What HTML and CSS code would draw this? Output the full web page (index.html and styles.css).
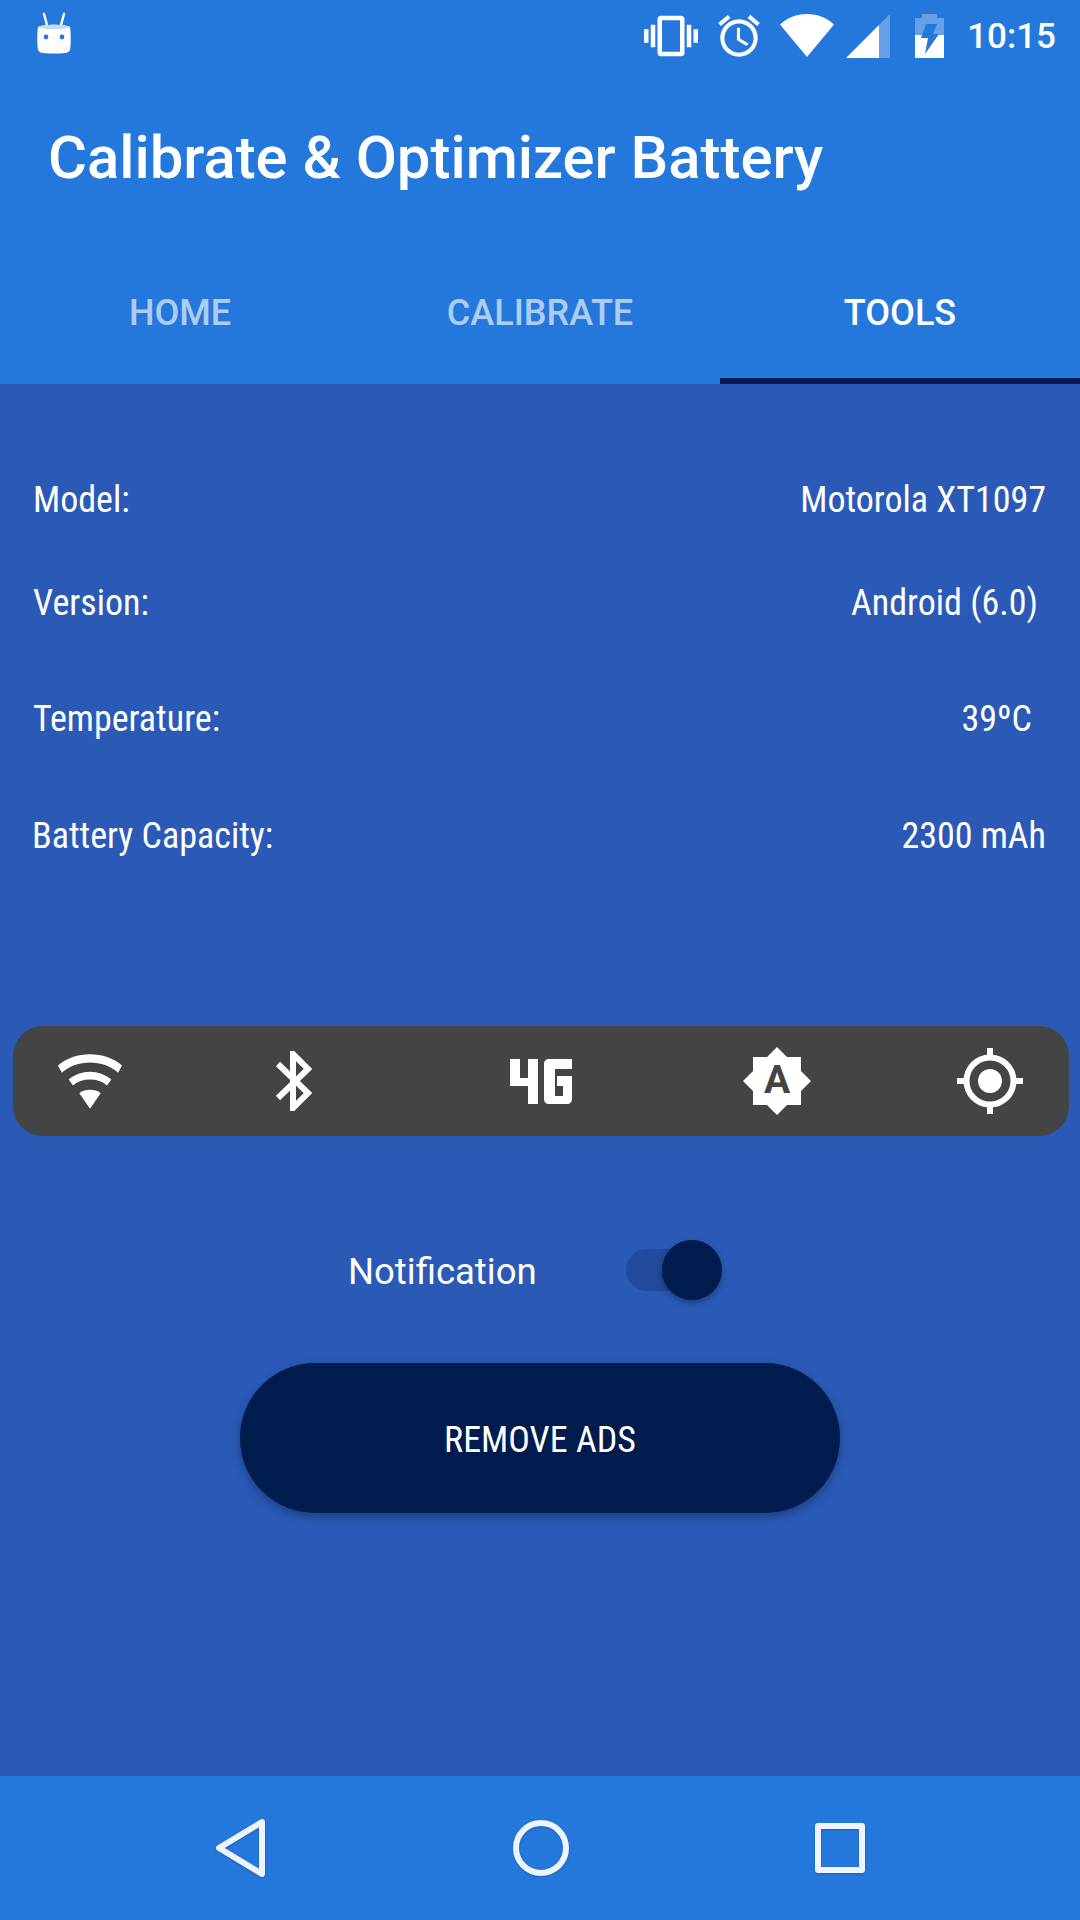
FILE: index.html
```html
<!DOCTYPE html>
<html lang="en">
  <head>
    <meta charset="UTF-8" />
    <meta name="viewport" content="width=device-width, initial-scale=1.0" />
    <title>Calibrate &amp; Optimizer Battery</title>
    <link rel="stylesheet" href="styles.css">
  </head>
  <body>
    <div class="screen">
      <header class="appbar">
        <div class="statusbar">
          <svg class="robot" width="40" height="44" viewBox="0 0 40 44">
            <path d="M10 3l3 11M30 3l-3 11" stroke="#fff" stroke-width="2.4" stroke-linecap="round" />
            <path d="M4 16c4-3 28-3 32 0 1 6 1 17 0 23-1 2-3 3-5 3-7 .7-15 .7-22 0-2 0-4-1-5-3-1-6-1-17 0-23z" fill="#fff" />
            <path d="M4 16c4-3 28-3 32 0-4 3-28 3-32 0z" fill="#c6daf5" />
            <circle cx="12" cy="26" r="2.4" fill="#2478db" />
            <circle cx="28" cy="26" r="2.4" fill="#2478db" />
          </svg>
          <div class="status-icons">
            <svg class="ic-vibrate" width="54" height="54" viewBox="0 0 24 24" fill="#fff">
              <path d="M0 15h2V9H0v6zm3 2h2V7H3v10zm19-8v6h2V9h-2zm-3 8h2V7h-2v10zM16.5 3h-9C6.67 3 6 3.67 6 4.5v15c0 .83.67 1.5 1.5 1.5h9c.83 0 1.5-.67 1.5-1.5v-15c0-.83-.67-1.5-1.5-1.5zM16 19H8V5h8v14z" />
            </svg>
            <svg class="ic-alarm" width="50" height="50" viewBox="0 0 24 24" fill="#fff">
              <path d="M22 5.72l-4.6-3.86-1.29 1.53 4.6 3.86L22 5.72zM7.88 3.39L6.6 1.86 2 5.71l1.29 1.53 4.59-3.85zM12.5 8H11v6l4.75 2.85.75-1.23-4-2.37V8zM12 4c-4.97 0-9 4.03-9 9s4.02 9 9 9c4.97 0 9-4.03 9-9s-4.03-9-9-9zm0 16c-3.87 0-7-3.13-7-7s3.13-7 7-7 7 3.13 7 7-3.13 7-7 7z" />
            </svg>
            <svg class="ic-wifi" width="54" height="44" viewBox="0 0 54 44" fill="#fff">
              <path d="M0 10.500C7 4 16.500 0 27 0s20 4 27 10.500L27 43z" />
            </svg>
            <svg class="ic-signal" width="44" height="44" viewBox="0 0 44 44" fill="#fff">
              <path d="M33 11L44 0v44H33z" opacity=".3" />
              <path d="M0 44L33 11v33z" />
            </svg>
            <svg class="ic-battery" width="29" height="44" viewBox="0 0 29 44" fill="#fff">
              <path d="M7 0h15v4h7v17H0V4h7z" opacity=".3" />
              <path d="M0 21h29v23H0z" />
              <path d="M11 10h11l-4 10h6L10 40l3-16H6z" fill="#2478db" />
            </svg>
            <span class="clock">10:15</span>
          </div>
        </div>
        <h1 class="title">Calibrate &amp; Optimizer Battery</h1>
        <nav class="tabs">
          <a class="tab">HOME</a>
          <a class="tab">CALIBRATE</a>
          <a class="tab active">TOOLS</a>
        </nav>
      </header>

      <main class="content">
        <div class="info-row row-model"><span>Model:</span><span>Motorola XT1097</span></div>
        <div class="info-row row-version"><span>Version:</span><span>Android (6.0)</span></div>
        <div class="info-row row-temp"><span>Temperature:</span><span>39ºC</span></div>
        <div class="info-row row-battery"><span>Battery Capacity:</span><span>2300 mAh</span></div>

        <div class="quick-bar">
          <svg class="q-wifi" width="64" height="55" viewBox="0 0 66 56" fill="#fff">
            <path d="M0 11.500C9 4 20.500 0 33 0s24 4 33 11.500L62 19C54 12 44 8.500 33 8.500S12 12 4 19z" />
            <path d="M11 26c6-5 14-8 22-8s16 3 22 8l-4.500 6C46 28 40 26 33 26s-13 2-17.500 6z" />
            <path d="M22 40c3-2.500 7-3.500 11-3.500s8 1 11 3.500L33 56z" />
          </svg>
          <svg class="q-bt" width="37" height="60" viewBox="0 0 37 60" fill="none" stroke="#fff" stroke-width="6">
            <path d="M3 13l30 29-15 15V3l15 15L3 47" />
          </svg>
          <svg class="q-4g" width="62" height="45" viewBox="0 0 62 45" fill="#fff">
            <path d="M0 0h10v19h8V0h10v45H18V27H0z" />
            <path d="M39 0h23v10H45v27h8V27h-6V17h15v23c0 3-2 5-5 5H39c-3 0-5-2-5-5V5c0-3 2-5 5-5z" />
          </svg>
          <svg class="q-auto" width="68" height="68" viewBox="0 0 68 68">
            <path d="M34 0l10 10h14v14l10 10-10 10v14H44L34 68 24 58H10V44L0 34l10-10V10h14z" fill="#fff" />
            <text class="q-letter" x="34" y="46" text-anchor="middle">A</text>
          </svg>
          <svg class="q-gps" width="66" height="66" viewBox="0 0 66 66" fill="none" stroke="#fff">
            <circle cx="33" cy="33" r="23.500" stroke-width="6" />
            <circle cx="33" cy="33" r="12" fill="#fff" stroke="none" />
            <path d="M33 0v10M33 56v10M0 33h10M56 33h10" stroke-width="6" />
          </svg>
        </div>

        <div class="notify-row">
          <span class="notify-label">Notification</span>
          <div class="switch"><div class="switch-thumb"></div></div>
        </div>

        <button class="remove-ads">REMOVE ADS</button>
      </main>

      <footer class="navbar">
        <svg class="nav-icon" width="52" height="60" viewBox="0 0 52 60" fill="none" stroke="#edf4fd" stroke-width="6" stroke-linejoin="round">
          <path d="M47 4L4 30l43 26z" />
        </svg>
        <svg class="nav-icon" width="56" height="56" viewBox="0 0 56 56" fill="none" stroke="#edf4fd" stroke-width="6">
          <circle cx="28" cy="28" r="25" />
        </svg>
        <svg class="nav-icon" width="50" height="50" viewBox="0 0 50 50" fill="none" stroke="#edf4fd" stroke-width="6" stroke-linejoin="round">
          <rect x="3" y="3" width="44" height="44" />
        </svg>
      </footer>
    </div>
  </body>
</html>
```

FILE: styles.css
```css
/* Base */
body {
  margin: 0;
  font-family: Roboto, "Noto Sans", sans-serif;
  color: #fff;
}
.screen {
  width: 1080px;
  height: 1920px;
  display: flex;
  flex-direction: column;
  background-color: #2a5ab6;
  overflow: hidden;
}

/* Top bar */
.appbar {
  background-color: #2478db;
  height: 384px;
  display: flex;
  flex-direction: column;
  flex-shrink: 0;
}
.statusbar {
  height: 72px;
  display: flex;
  justify-content: space-between;
  align-items: center;
  padding: 0 24px 0 34px;
}
.robot {
  margin-top: -6px;
}
.status-icons {
  display: flex;
  align-items: center;
}
.ic-alarm { margin-left: 16px; }
.ic-wifi { margin-left: 16px; }
.ic-signal { margin-left: 12px; }
.ic-battery { margin-left: 25px; }
.clock {
  margin-left: 23px;
  font-size: 35px;
  font-weight: 500;
}
.title {
  margin: 0;
  padding: 0 0 0 48px;
  height: 168px;
  line-height: 173px;
  font-size: 59.8px;
  font-weight: 500;
  white-space: nowrap;
}

/* Tabs */
.tabs {
  display: flex;
  height: 144px;
}
.tab {
  flex: 1;
  text-align: center;
  line-height: 147px;
  height: 144px;
  box-sizing: border-box;
  font-size: 36px;
  font-weight: 500;
  color: rgba(255, 255, 255, 0.65);
}
.tab.active {
  color: #fff;
  border-bottom: 6px solid #001b4d;
}

/* Info rows */
.content {
  flex: 1;
  display: flex;
  flex-direction: column;
  align-items: stretch;
}
.info-row {
  display: flex;
  justify-content: space-between;
  font-size: 36px;
  font-stretch: condensed;
  line-height: 44px;
}
.row-model { margin-top: 94px; padding: 0 34px 0 33px; }
.row-version { margin-top: 59px; padding: 0 42px 0 33px; }
.row-temp { margin-top: 72px; padding: 0 48px 0 33px; }
.row-battery { margin-top: 73px; padding: 0 34px 0 32px; }

/* Quick settings strip */
.quick-bar {
  margin: 168px 11px 0 13px;
  height: 110px;
  border-radius: 30px;
  background-color: #444;
  display: flex;
  align-items: center;
  padding-left: 45px;
}
.q-bt { margin-left: 153px; }
.q-4g { margin-left: 198px; }
.q-auto { margin-left: 171px; }
.q-gps { margin-left: 146px; }
.q-letter {
  font-family: Roboto, sans-serif;
  font-size: 39px;
  font-weight: 700;
  fill: #444;
}

/* Notification switch */
.notify-row {
  margin-top: 110px;
  display: flex;
  align-items: center;
  padding-left: 348px;
}
.notify-label {
  font-size: 36.5px;
  width: 278px;
  padding-top: 4px;
}
.switch {
  width: 70px;
  height: 42px;
  border-radius: 21px;
  background-color: #204a9b;
  position: relative;
}
.switch-thumb {
  position: absolute;
  left: 36px;
  top: -9px;
  width: 60px;
  height: 60px;
  border-radius: 50%;
  background-color: #001b4d;
  box-shadow: 0 3px 6px rgba(0, 0, 0, 0.3);
}

/* Button */
.remove-ads {
  align-self: center;
  margin-top: 70px;
  width: 600px;
  height: 150px;
  padding: 4px 0 0;
  border: none;
  border-radius: 75px;
  background-color: #001b4d;
  color: #fff;
  font-family: Roboto, sans-serif;
  font-size: 36px;
  font-stretch: condensed;
  box-shadow: 0 4px 10px rgba(0, 0, 0, 0.3);
}

/* Bottom navigation */
.navbar {
  height: 144px;
  flex-shrink: 0;
  background-color: #2478db;
  display: flex;
  align-items: center;
  justify-content: space-between;
  padding: 0 215px 0 215px;
}
.nav-icon {
  filter: drop-shadow(0 1px 1px rgba(0, 0, 0, 0.2));
}
```
